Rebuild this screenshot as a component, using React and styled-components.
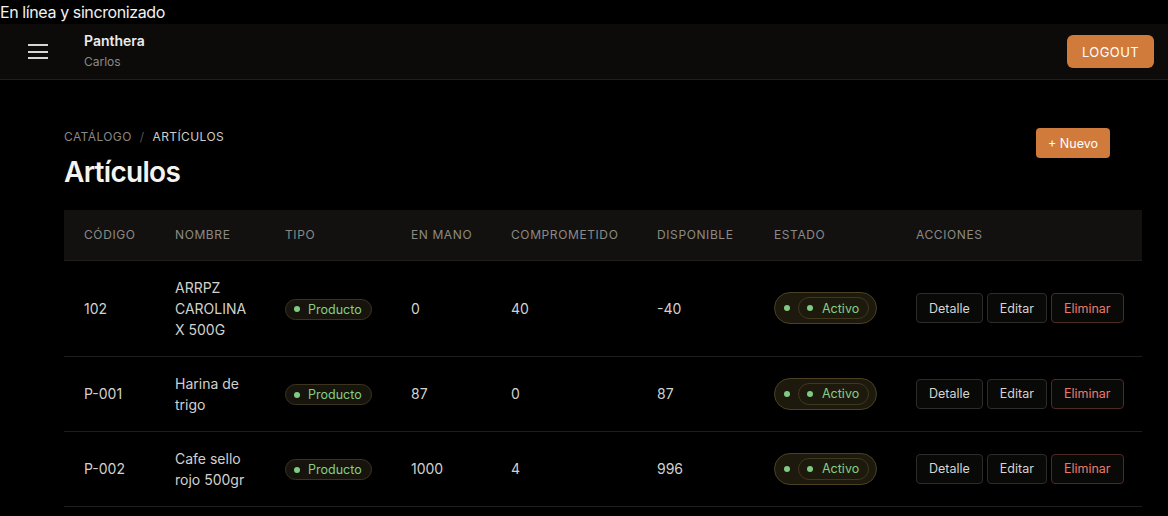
import React from "react";
import styled, { createGlobalStyle } from "styled-components";

const GlobalStyle = createGlobalStyle`
  html, body {
    margin: 0;
    background: #000;
    color: #e8e6e3;
    font-family: Inter, "Noto Sans", sans-serif;
  }
`;

const St = {
  SyncLine: styled.div`
    height: 24px;
    line-height: 24px;
    font-size: 16px;
    letter-spacing: -0.4px;
    color: #f2f2f2;
  `,

  Header: styled.header`
    display: flex;
    align-items: center;
    height: 55px;
    padding: 0 14px 0 28px;
    background: #0c0b09;
    border-bottom: 1px solid #1f1e1b;
  `,

  MenuButton: styled.button`
    display: flex;
    flex-direction: column;
    justify-content: space-between;
    width: 20px;
    height: 15px;
    padding: 0;
    margin-right: 36px;
    background: none;
    border: none;

    span {
      display: block;
      height: 2px;
      background: #d8d6d2;
    }
  `,

  Brand: styled.div`
    display: flex;
    flex-direction: column;
    gap: 5px;
    flex: 1;
    margin-top: -2px;
  `,

  BrandName: styled.span`
    font-size: 14px;
    font-weight: 600;
    color: #ecebe8;
  `,

  UserName: styled.span`
    font-size: 12px;
    color: #8b8985;
  `,

  OrangeButton: styled.button`
    height: ${({ height }) => height || "33px"};
    padding: 0 ${({ padX }) => padX || "16px"};
    background: #d07a3c;
    border: none;
    border-radius: ${({ radius }) => radius || "6px"};
    color: #fff;
    font-family: inherit;
    font-size: ${({ fontSize }) => fontSize || "13px"};
    letter-spacing: ${({ spacing }) => spacing || "0"};
    font-weight: ${({ weight }) => weight || 500};
  `,

  Main: styled.main`
    padding: 48px 26px 0 64px;
  `,

  TitleRow: styled.div`
    display: flex;
    justify-content: space-between;
    align-items: flex-start;
    margin-right: 32px;
  `,

  Breadcrumb: styled.div`
    display: flex;
    gap: 8px;
    font-size: 12px;
    letter-spacing: 0.4px;
    text-transform: uppercase;
    color: #8a8884;
    margin-top: 1px;
  `,

  Crumb: styled.span`
    color: ${({ current }) => (current ? "#cfcdc9" : "#8a8884")};
  `,

  Sep: styled.span`
    color: #55534f;
  `,

  Title: styled.h1`
    margin: 11px 0 0;
    font-size: 28px;
    font-weight: 600;
    letter-spacing: -0.7px;
    color: #f4f3f1;
  `,

  Table: styled.table`
    width: 1078px;
    margin-top: 21px;
    border-collapse: collapse;
    table-layout: fixed;
  `,

  HeadRow: styled.tr`
    background: #121110;
    border-bottom: 1px solid #1f1e1c;
  `,

  Th: styled.th`
    box-sizing: border-box;
    width: ${({ w }) => w}px;
    height: 50px;
    padding: 0 0 0 20px;
    text-align: left;
    font-size: 12px;
    font-weight: 400;
    letter-spacing: 0.6px;
    color: #8c8a85;
  `,

  Row: styled.tr`
    border-bottom: 1px solid #1f1e1c;
  `,

  Td: styled.td`
    padding: 16px 20px;
    font-size: 14px;
    line-height: 21px;
    color: #d3d1cd;
    vertical-align: middle;
  `,

  TypeBadge: styled.span`
    display: inline-flex;
    align-items: center;
    gap: 8px;
    height: 21px;
    padding: 0 9px 0 8px;
    box-sizing: border-box;
    border: 1px solid #3b3520;
    background: #16140c;
    border-radius: 11px;
    font-size: 12.5px;
    color: #84cf86;
  `,

  Dot: styled.span`
    width: 6px;
    height: 6px;
    border-radius: 50%;
    background: #7fcb83;
  `,

  StatusOuter: styled.span`
    display: inline-flex;
    align-items: center;
    gap: 8px;
    height: 32px;
    padding: 0 7px 0 9px;
    box-sizing: border-box;
    border: 1px solid #4a4122;
    background: #1d190d;
    border-radius: 16px;
  `,

  StatusInner: styled.span`
    display: inline-flex;
    align-items: center;
    gap: 9px;
    height: 22px;
    padding: 0 9px 0 8px;
    box-sizing: border-box;
    border: 1px solid #3f3820;
    border-radius: 11px;
    font-size: 12.5px;
    color: #84cf86;
  `,

  Actions: styled.div`
    display: flex;
    gap: 4px;
  `,

  ActionButton: styled.button`
    height: 30px;
    padding: 0 12px;
    background: #090908;
    border: 1px solid ${({ danger }) => (danger ? "#4b2c22" : "#2e2c29")};
    border-radius: 4px;
    font-family: inherit;
    font-size: 12.5px;
    color: ${({ danger }) => (danger ? "#ea7c6c" : "#d6d4d0")};
  `,
};

const columns = [
  ["Código", 91],
  ["Nombre", 110],
  ["Tipo", 126],
  ["En mano", 100],
  ["Comprometido", 146],
  ["Disponible", 117],
  ["Estado", 142],
  ["Acciones", 246],
];

const articulos = [
  { codigo: "102", nombre: "ARRPZ CAROLINA X 500G", mano: 0, comp: 40, disp: -40 },
  { codigo: "P-001", nombre: "Harina de trigo", mano: 87, comp: 0, disp: 87 },
  { codigo: "P-002", nombre: "Cafe sello rojo 500gr", mano: 1000, comp: 4, disp: 996 },
];

const App = () => {
  return (
    <>
      <GlobalStyle />
      <St.SyncLine>En línea y sincronizado</St.SyncLine>
      <St.Header>
        <St.MenuButton aria-label="menu">
          <span />
          <span />
          <span />
        </St.MenuButton>
        <St.Brand>
          <St.BrandName>Panthera</St.BrandName>
          <St.UserName>Carlos</St.UserName>
        </St.Brand>
        <St.OrangeButton padX="15px" spacing="0.4px" weight={400}>
          LOGOUT
        </St.OrangeButton>
      </St.Header>

      <St.Main>
        <St.TitleRow>
          <div>
            <St.Breadcrumb>
              <St.Crumb>Catálogo</St.Crumb>
              <St.Sep>/</St.Sep>
              <St.Crumb current>Artículos</St.Crumb>
            </St.Breadcrumb>
            <St.Title>Artículos</St.Title>
          </div>
          <St.OrangeButton
            height="30px"
            padX="12px"
            radius="4px"
            fontSize="12.5px"
            weight={400}
          >
            + Nuevo
          </St.OrangeButton>
        </St.TitleRow>

        <St.Table>
          <thead>
            <St.HeadRow>
              {columns.map(([label, w]) => (
                <St.Th key={label} w={w}>
                  {label.toUpperCase()}
                </St.Th>
              ))}
            </St.HeadRow>
          </thead>
          <tbody>
            {articulos.map((a) => (
              <St.Row key={a.codigo}>
                <St.Td>{a.codigo}</St.Td>
                <St.Td>{a.nombre}</St.Td>
                <St.Td>
                  <St.TypeBadge>
                    <St.Dot />
                    Producto
                  </St.TypeBadge>
                </St.Td>
                <St.Td>{a.mano}</St.Td>
                <St.Td>{a.comp}</St.Td>
                <St.Td>{a.disp}</St.Td>
                <St.Td>
                  <St.StatusOuter>
                    <St.Dot />
                    <St.StatusInner>
                      <St.Dot />
                      Activo
                    </St.StatusInner>
                  </St.StatusOuter>
                </St.Td>
                <St.Td>
                  <St.Actions>
                    <St.ActionButton>Detalle</St.ActionButton>
                    <St.ActionButton>Editar</St.ActionButton>
                    <St.ActionButton danger>Eliminar</St.ActionButton>
                  </St.Actions>
                </St.Td>
              </St.Row>
            ))}
          </tbody>
        </St.Table>
      </St.Main>
    </>
  );
};

export default App;
